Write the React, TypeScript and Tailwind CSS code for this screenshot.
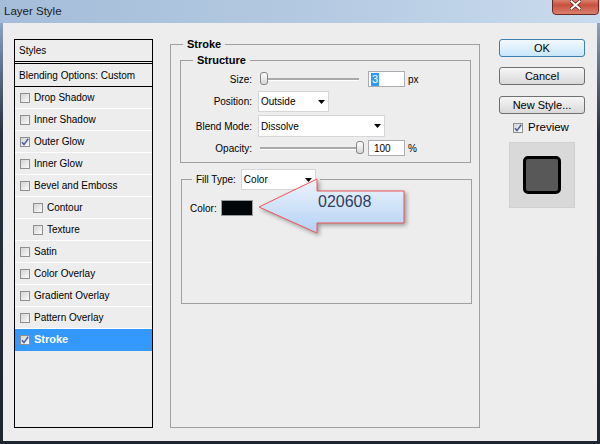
import React from 'react';

type StyleRow = { label: string; checked?: boolean; sub?: boolean; active?: boolean };

const styleRows: StyleRow[] = [
  { label: 'Drop Shadow' },
  { label: 'Inner Shadow' },
  { label: 'Outer Glow', checked: true },
  { label: 'Inner Glow' },
  { label: 'Bevel and Emboss' },
  { label: 'Contour', sub: true },
  { label: 'Texture', sub: true },
  { label: 'Satin' },
  { label: 'Color Overlay' },
  { label: 'Gradient Overlay' },
  { label: 'Pattern Overlay' },
  { label: 'Stroke', checked: true, active: true },
];

const Check = ({ checked }: { checked?: boolean }) => (
  <span className="relative inline-flex h-[10px] w-[10px] shrink-0 items-center justify-center border border-[#8f8f8f] bg-gradient-to-br from-[#d4d4d4] to-[#fafafa]">
    {checked && (
      <svg width="8" height="8" viewBox="0 0 8 8" className="absolute">
        <path d="M1 4.2 L3 6.6 L7.2 0.8" fill="none" stroke="#4b5d98" strokeWidth="1.5" />
      </svg>
    )}
  </span>
);

const DownArrow = () => (
  <svg width="7" height="4" viewBox="0 0 7 4">
    <polygon points="0,0 7,0 3.5,4" fill="#000" />
  </svg>
);

const Dropdown = ({ value, width }: { value: string; width: string }) => (
  <div className={`${width} flex h-full shrink-0 items-center justify-between border border-[#d6d6d6] bg-white pl-[2px] pr-[3px] text-[10px]`}>
    <span>{value}</span>
    <DownArrow />
  </div>
);

const Slider = ({ pos }: { pos: string }) => (
  <div className="relative h-[14px] w-[104px]">
    <div className="absolute left-[2px] right-[3px] top-[6px] h-[2px] bg-[#a9a9a9] shadow-[0_1px_0_#fff]" />
    <div className={`absolute ${pos} top-0 h-[13px] w-[8px] rounded-[3px] border border-[#868686] bg-gradient-to-b from-[#ffffff] to-[#d6d6d6]`} />
  </div>
);

const Button = ({ label, primary }: { label: string; primary?: boolean }) => (
  <div
    className={`flex h-[18px] items-center justify-center rounded-[3px] border text-[11px] ${
      primary
        ? 'border-[#3c7fb1] bg-gradient-to-b from-[#f2f9fe] to-[#c8e6f9]'
        : 'border-[#707070] bg-gradient-to-b from-[#f6f6f6] to-[#d9d9d9]'
    }`}
  >
    {label}
  </div>
);

export default function App() {
  return (
    <div className="relative flex h-[444px] w-[600px] flex-col overflow-hidden bg-[linear-gradient(180deg,#a8c0db_0%,#6c819a_12%,#27313d_30%,#1d2530_100%)] font-['Liberation_Sans',Arial,sans-serif] text-black">
      {/* title bar */}
      <div className="flex h-[23px] shrink-0 items-start justify-between bg-gradient-to-r from-[#a5bdd9] via-[#b3c9e1] to-[#c9dbee]">
        <span className="mt-[3px] pl-[4px] text-[11.5px] leading-[16px] text-[#1b1b1b]">Layer Style</span>
        <div className="mr-[1px] -mt-[5px] flex h-[20px] w-[47px] items-center justify-center rounded-[4px] border border-[#6b2a22] bg-gradient-to-b from-[#e6a696] via-[#c8503d] to-[#d9806f]">
          <svg width="11" height="10" viewBox="0 0 11 10">
            <path d="M1.5 1.5 L9.5 8.5 M9.5 1.5 L1.5 8.5" stroke="#5a2620" strokeWidth="3.6" strokeLinecap="square" />
            <path d="M1.5 1.5 L9.5 8.5 M9.5 1.5 L1.5 8.5" stroke="#ffffff" strokeWidth="2" strokeLinecap="square" />
          </svg>
        </div>
      </div>

      {/* dialog body */}
      <div className="mx-[3px] mb-[3px] flex flex-1 items-start bg-[#ededed] pl-[11px] pt-[16px]">
        {/* styles list */}
        <div className="h-[389px] w-[139px] shrink-0 border border-black text-[10px]">
          <div className="flex h-[22px] items-center border-b border-black pl-[4px]">Styles</div>
          <div className="mt-[1px] flex h-[24px] items-center border-y border-black pl-[4px]">Blending Options: Custom</div>
          {styleRows.map((r) => (
            <div
              key={r.label}
              className={`flex h-[22px] items-center gap-[4px] border-b ${r.sub ? 'pl-[18px]' : 'pl-[5px]'} ${
                r.active ? 'border-[#3399ff] bg-[#3399ff] font-bold text-white text-[11px]' : 'border-white'
              }`}
            >
              <Check checked={r.checked} />
              <span>{r.label}</span>
            </div>
          ))}
        </div>

        {/* stroke group */}
        <fieldset className="ml-[17px] w-[310px] shrink-0 border border-[#a0a0a0] pb-[123px] text-[10px]">
          <legend className="ml-[12px] px-[4px] text-[11px] font-bold leading-[10px]">Stroke</legend>

          <fieldset className="ml-[9px] mt-[6px] w-[291px] border border-[#a0a0a0] pb-[6px]">
            <legend className="ml-[12px] px-[4px] text-[11px] font-bold leading-[10px]">Structure</legend>

            <div className="mt-[5px] flex h-[18px] items-center">
              <span className="w-[71px] text-right">Size:</span>
              <div className="ml-[6px]">
                <Slider pos="left-[2px]" />
              </div>
              <div className="ml-[6px] flex h-[16px] w-[37px] items-center border border-[#abadb3] bg-white pl-[2px]">
                <span className="bg-[#3399ff] px-[1px] text-[11px] leading-[13px] text-white">3</span>
              </div>
              <span className="ml-[3px]">px</span>
            </div>

            <div className="mt-[3px] flex h-[21px] items-center">
              <span className="w-[71px] text-right">Position:</span>
              <div className="ml-[6px] h-full">
                <Dropdown value="Outside" width="w-[71px]" />
              </div>
            </div>

            <div className="mt-[3px] flex h-[22px] items-center">
              <span className="w-[71px] text-right">Blend Mode:</span>
              <div className="ml-[6px] h-full">
                <Dropdown value="Dissolve" width="w-[127px]" />
              </div>
            </div>

            <div className="mt-[3px] flex h-[16px] items-center">
              <span className="w-[71px] text-right">Opacity:</span>
              <div className="ml-[6px]">
                <Slider pos="left-[98px]" />
              </div>
              <div className="ml-[6px] flex h-[16px] w-[37px] items-center border border-[#abadb3] bg-white pl-[5px] text-[10px]">
                100
              </div>
              <span className="ml-[3px]">%</span>
            </div>
          </fieldset>

          <fieldset className="ml-[10px] mt-[6px] w-[291px] border border-[#a0a0a0] pb-[87px]">
            <legend className="ml-[10px] px-[4px]">
              <div className="flex h-[21px] items-center gap-[5px]">
                <span className="shrink-0">Fill Type:</span>
                <div className="h-full shrink-0">
                  <Dropdown value="Color" width="w-[75px]" />
                </div>
              </div>
            </legend>
            <div className="mt-[10px] flex h-[16px] items-center pl-[8px]">
              <span>Color:</span>
              <div className="ml-[4px] h-[16px] w-[32px] border border-[#9a9a9a] bg-[#020608]" />
            </div>
          </fieldset>
        </fieldset>

        {/* buttons */}
        <div className="ml-[19px] flex w-[86px] shrink-0 flex-col">
          <Button label="OK" primary />
          <div className="mt-[10px]">
            <Button label="Cancel" />
          </div>
          <div className="mt-[11px]">
            <Button label="New Style..." />
          </div>
          <div className="mt-[7px] flex h-[14px] items-center gap-[5px] pl-[14px] text-[11.5px]">
            <Check checked />
            <span>Preview</span>
          </div>
          <div className="ml-[10px] mt-[7px] flex h-[66px] w-[66px] items-center justify-center border border-[#d0d0d0] bg-[#d9d9d9]">
            <div className="h-[38px] w-[38px] rounded-[5px] border-[3px] border-black bg-[#585858]" />
          </div>
        </div>
      </div>

      {/* callout arrow */}
      <div className="absolute left-[257px] top-[176px] h-[62px] w-[152px]">
        <svg width="152" height="62" viewBox="0 0 152 62" className="drop-shadow-[2px_2px_2px_rgba(0,0,0,0.35)]">
          <defs>
            <linearGradient id="callout" x1="0" y1="0" x2="0" y2="1">
              <stop offset="0" stopColor="#eef4fc" />
              <stop offset="1" stopColor="#b3d1f4" />
            </linearGradient>
          </defs>
          <polygon
            points="2,31 60,3 60,15 147,15 147,47 60,47 60,57"
            fill="url(#callout)"
            stroke="#ee5555"
            strokeWidth="1"
          />
        </svg>
        <span className="absolute left-[61px] top-[17px] text-[16px] leading-[18px] text-[#2f3f5f]">020608</span>
      </div>
    </div>
  );
}
